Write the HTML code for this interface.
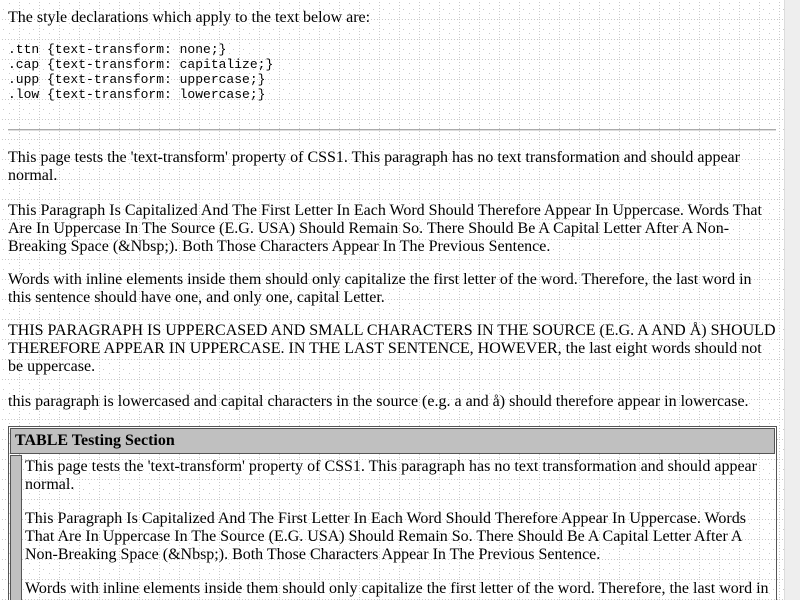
<!DOCTYPE html>
<html><head><style>
html,body{margin:0;padding:0;width:800px;height:600px;overflow:hidden;background:#fff;position:relative}
#bg{position:absolute;left:0;top:0;z-index:0}
.t{position:absolute;left:8px;font:16px/18px "Liberation Serif",serif;color:#000;white-space:nowrap;z-index:1}
pre{position:absolute;left:8px;top:42px;margin:0;font:13px/15px "Liberation Mono",monospace;z-index:1}
#hr{position:absolute;left:8px;top:129px;width:768px;height:1px;background:#aaa;border-bottom:1px solid #ddd;z-index:1}
#sb{position:absolute;left:784px;top:0;width:16px;height:600px;background:#eee;border-left:1px solid #ddd;z-index:2}
#th{position:absolute;left:789px;top:3px;width:9px;height:486px;background:#c0c0c0;border-radius:5px}
#tab{position:absolute;left:8px;top:426px;width:767px;height:180px;border:1px solid #555;border-bottom:0;z-index:1}
#hd{position:absolute;left:1px;top:1px;right:1px;height:26px;background:#c0c0c0;border:1px solid #555;box-sizing:border-box;font:bold 16px/24px "Liberation Serif",serif;padding-left:4px}
#lc{position:absolute;left:1px;top:28px;width:10px;height:160px;background:#c0c0c0;border:1px solid #555;border-bottom:0}
</style></head><body>
<svg id="bg" width="800" height="600"><defs>
<pattern id="p" width="20" height="20" patternUnits="userSpaceOnUse" x="-1" y="-1">
<line x1="0" y1="0.5" x2="20" y2="0.5" stroke="#c8c8c8" stroke-dasharray="1 2"/>
<line x1="0.5" y1="0" x2="0.5" y2="20" stroke="#c8c8c8" stroke-dasharray="1 2"/>
<rect x="10" y="4" width="1" height="1" fill="#c8c8c8"/><rect x="10" y="14" width="1" height="1" fill="#c8c8c8"/>
<rect x="4" y="10" width="1" height="1" fill="#c8c8c8"/><rect x="14" y="10" width="1" height="1" fill="#c8c8c8"/>
</pattern></defs><rect width="800" height="600" fill="url(#p)"/></svg>
<div class="t" style="top:9px">The style declarations which apply to the text below are:</div>
<pre>.ttn {text-transform: none;}
.cap {text-transform: capitalize;}
.upp {text-transform: uppercase;}
.low {text-transform: lowercase;}</pre>
<div id="hr"></div>
<div class="t" style="top:149px">This page tests the 'text-transform' property of CSS1. This paragraph has no text transformation and should appear<br>normal.</div>
<div class="t" style="top:202px">This Paragraph Is Capitalized And The First Letter In Each Word Should Therefore Appear In Uppercase. Words That<br>Are In Uppercase In The Source (E.G. USA) Should Remain So. There Should Be A Capital Letter After A Non-<br>Breaking Space (&amp;Nbsp;). Both Those Characters Appear In The Previous Sentence.</div>
<div class="t" style="top:271px">Words with inline elements inside them should only capitalize the first letter of the word. Therefore, the last word in<br>this sentence should have one, and only one, capital Letter.</div>
<div class="t" style="top:322px">THIS PARAGRAPH IS UPPERCASED AND SMALL CHARACTERS IN THE SOURCE (E.G. A AND Å) SHOULD<br>THEREFORE APPEAR IN UPPERCASE. IN THE LAST SENTENCE, HOWEVER, the last eight words should not<br>be uppercase.</div>
<div class="t" style="top:393px">this paragraph is lowercased and capital characters in the source (e.g. a and å) should therefore appear in lowercase.</div>
<div id="tab"><div id="hd">TABLE Testing Section</div><div id="lc"></div></div>
<div class="t" style="left:25px;top:458px">This page tests the 'text-transform' property of CSS1. This paragraph has no text transformation and should appear<br>normal.</div>
<div class="t" style="left:25px;top:510px">This Paragraph Is Capitalized And The First Letter In Each Word Should Therefore Appear In Uppercase. Words<br>That Are In Uppercase In The Source (E.G. USA) Should Remain So. There Should Be A Capital Letter After A<br>Non-Breaking Space (&amp;Nbsp;). Both Those Characters Appear In The Previous Sentence.</div>
<div class="t" style="left:25px;top:580px">Words with inline elements inside them should only capitalize the first letter of the word. Therefore, the last word in</div>
<div id="sb"><div id="th"></div></div>
</body></html>
